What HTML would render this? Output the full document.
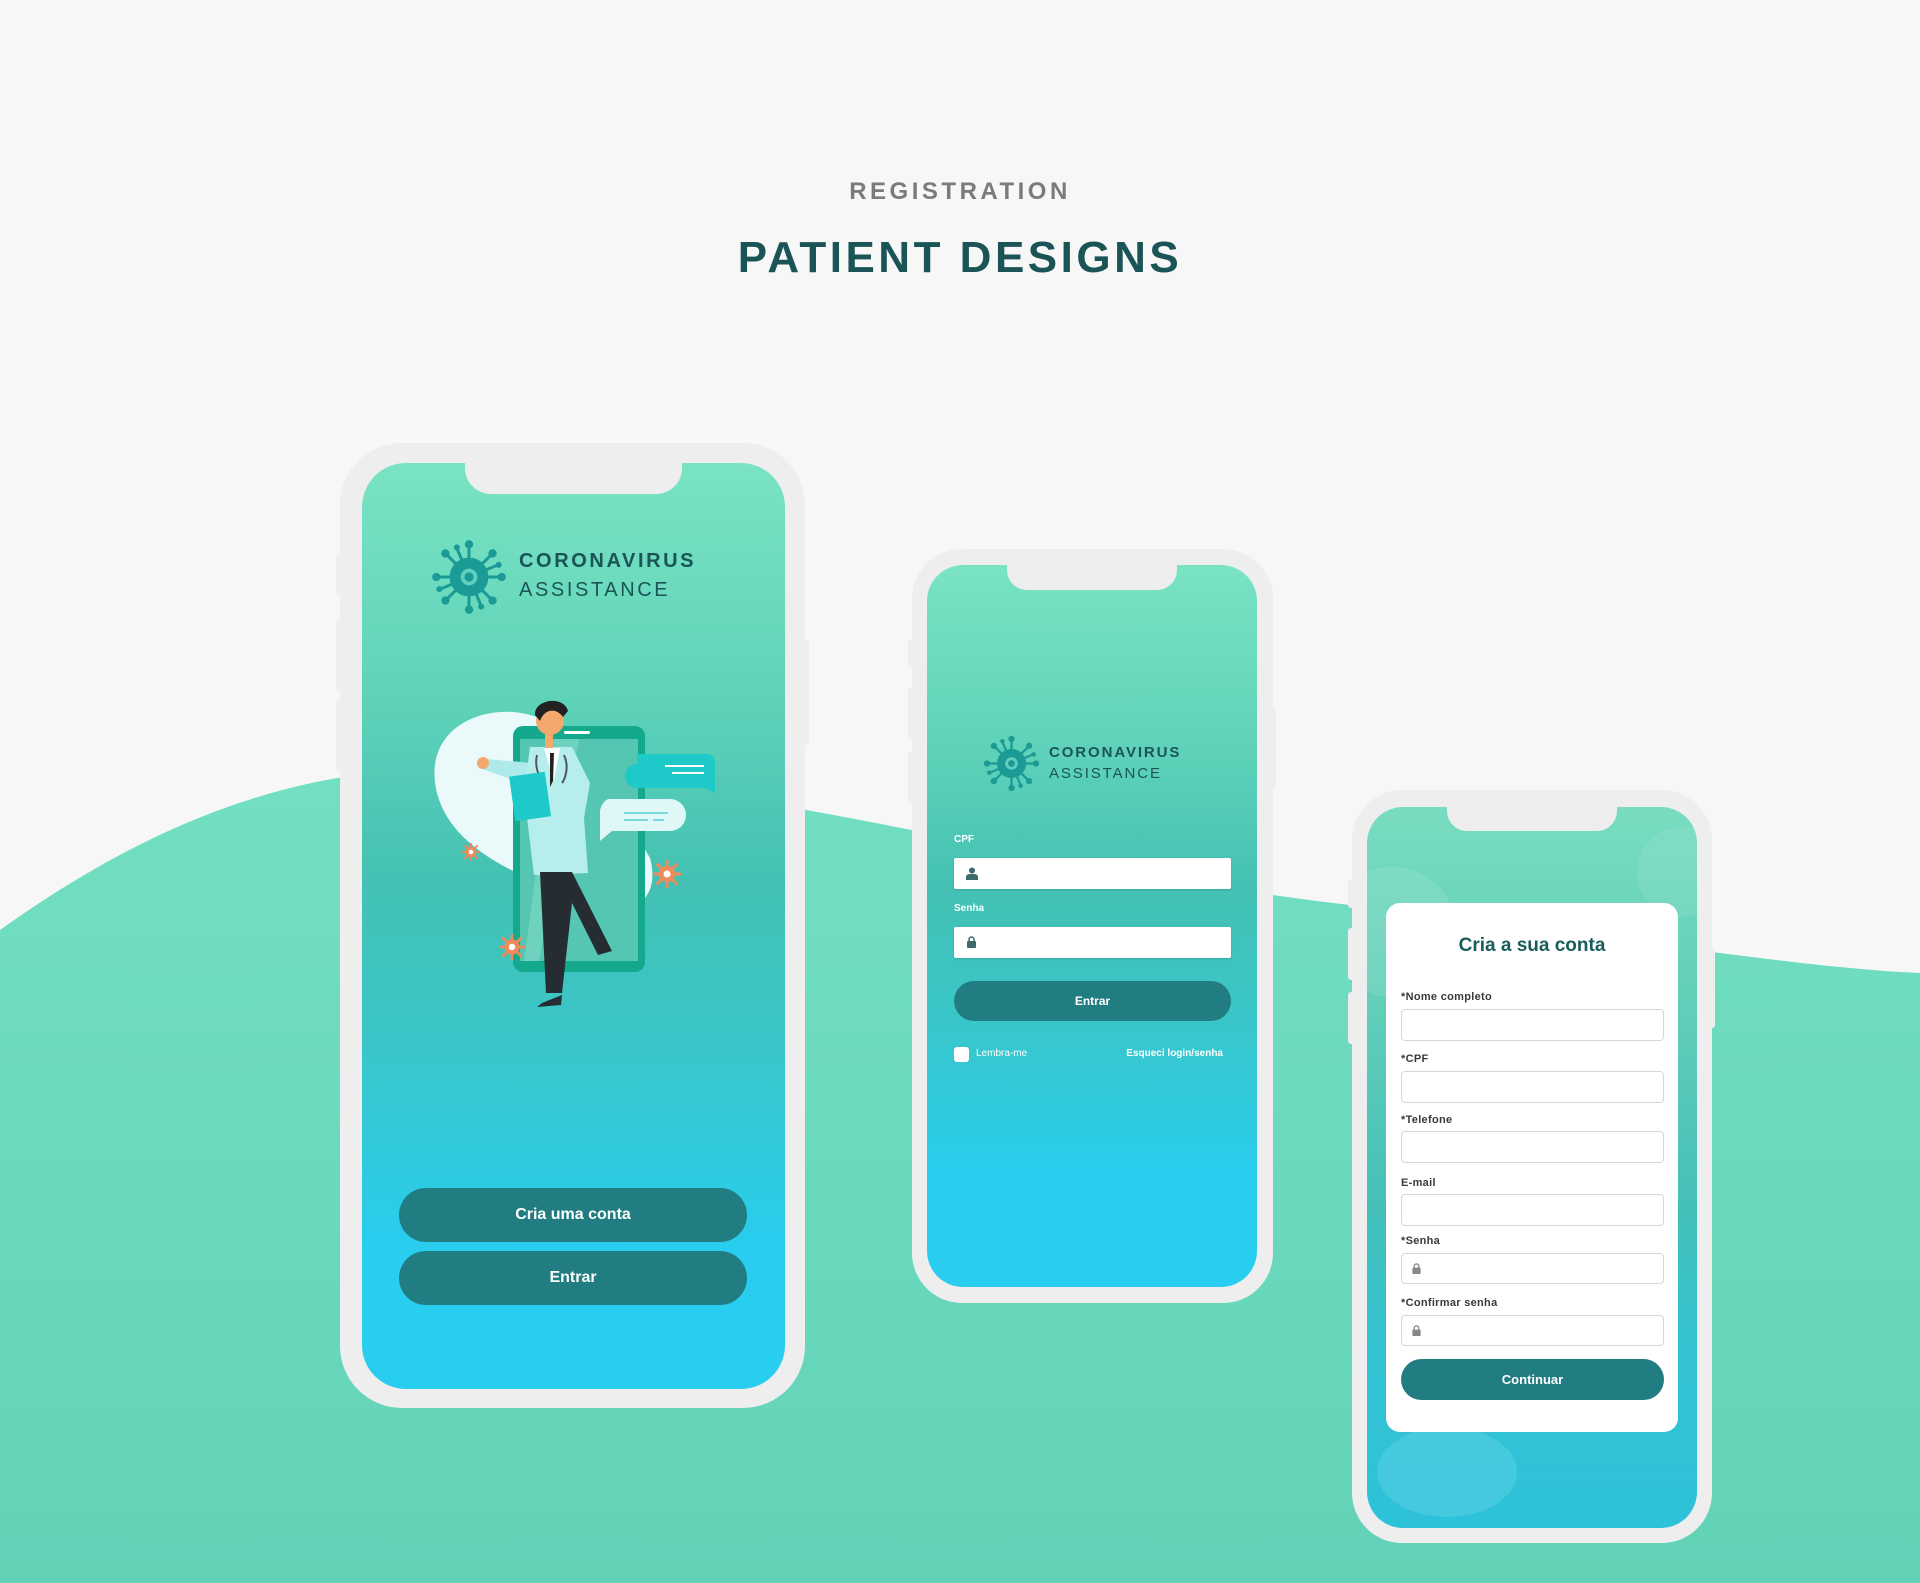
<!DOCTYPE html>
<html><head><meta charset="utf-8">
<style>
*{margin:0;padding:0;box-sizing:border-box}
body{width:1920px;height:1583px;position:relative;overflow:hidden;background:#f7f7f7;font-family:"Liberation Sans",sans-serif}
.abs{position:absolute}
.frame{position:absolute;background:#eeeeee;border-radius:62px}
.screen{position:absolute;overflow:hidden;background:linear-gradient(180deg,#7ae3c3 0%,#5fd3b9 25%,#44c1b3 45%,#38c7cc 65%,#28cdef 85%,#28cdef 100%)}
.notch{position:absolute;background:#eeeeee;border-radius:0 0 26px 26px}
.btn{position:absolute;background:#217d82;color:#fff;font-weight:bold;text-align:center;border-radius:30px}
.lbl{position:absolute;font-size:11px;font-weight:bold;color:#3a3a3a;letter-spacing:.3px}
.inp{position:absolute;background:#fff;border:1.5px solid #d6d6d6;border-radius:4px}
</style></head><body>
<svg width="0" height="0" style="position:absolute">
<defs>
<g id="virus">
<g fill="#1b9a96" stroke="#1b9a96">
<g stroke-width="4">
<line x1="50" y1="50" x2="50" y2="8"/><line x1="50" y1="50" x2="50" y2="92"/>
<line x1="50" y1="50" x2="8" y2="50"/><line x1="50" y1="50" x2="92" y2="50"/>
<line x1="50" y1="50" x2="20" y2="20"/><line x1="50" y1="50" x2="80" y2="80"/>
<line x1="50" y1="50" x2="80" y2="20"/><line x1="50" y1="50" x2="20" y2="80"/>
<line x1="50" y1="50" x2="34" y2="12"/><line x1="50" y1="50" x2="66" y2="88"/>
<line x1="50" y1="50" x2="88" y2="34"/><line x1="50" y1="50" x2="12" y2="66"/>
</g>
<circle cx="50" cy="7" r="5"/><circle cx="50" cy="93" r="5"/><circle cx="7" cy="50" r="5"/><circle cx="93" cy="50" r="5"/>
<circle cx="19" cy="19" r="5"/><circle cx="81" cy="81" r="5"/><circle cx="81" cy="19" r="5"/><circle cx="19" cy="81" r="5"/>
<circle cx="34" cy="11" r="3.5"/><circle cx="66" cy="89" r="3.5"/><circle cx="89" cy="34" r="3.5"/><circle cx="11" cy="66" r="3.5"/>
<circle cx="50" cy="50" r="25"/>
</g>
<circle cx="50" cy="50" r="11" fill="#5fcfbf"/>
<circle cx="50" cy="50" r="6" fill="#1b9a96"/>
</g>
<g id="ovir">
<g stroke="#ef8a5a" stroke-width="2.5"><line x1="12" y1="0" x2="12" y2="24"/><line x1="0" y1="12" x2="24" y2="12"/><line x1="3" y1="3" x2="21" y2="21"/><line x1="21" y1="3" x2="3" y2="21"/></g>
<circle cx="12" cy="12" r="7" fill="#ef8a5a"/><circle cx="12" cy="12" r="3" fill="#fff"/>
</g>
</defs>
</svg>

<!-- wave -->
<svg class="abs" style="left:0;top:0" width="1920" height="1583">
<defs><linearGradient id="wg" x1="0" y1="0" x2="0" y2="1"><stop offset="0" stop-color="#73dfc2"/><stop offset="1" stop-color="#62d2b7"/></linearGradient></defs>
<path d="M0,930 C140,830 260,785 380,772 C650,750 1000,865 1350,905 C1600,935 1800,968 1920,973 L1920,1583 L0,1583 Z" fill="url(#wg)"/>
</svg>

<div class="abs" style="left:0;width:1920px;top:178px;text-align:center;font-size:24px;font-weight:bold;color:#7b7b7b;letter-spacing:3.5px">REGISTRATION</div>
<div class="abs" style="left:0;width:1920px;top:233px;text-align:center;font-size:44px;font-weight:bold;color:#1b5457;letter-spacing:3.5px">PATIENT DESIGNS</div>

<!-- PHONE 1 -->
<div class="frame" style="left:336px;top:555px;width:8px;height:40px;border-radius:3px"></div>
<div class="frame" style="left:336px;top:620px;width:8px;height:70px;border-radius:3px"></div>
<div class="frame" style="left:336px;top:700px;width:8px;height:70px;border-radius:3px"></div>
<div class="frame" style="left:800px;top:640px;width:9px;height:105px;border-radius:3px"></div>
<div class="frame" style="left:340px;top:443px;width:465px;height:965px"></div>
<div class="screen" style="left:362px;top:463px;width:423px;height:926px;border-radius:44px">
 <div class="notch" style="left:103px;top:0;width:217px;height:31px"></div>
 <svg class="abs" style="left:69px;top:76px" width="76" height="76" viewBox="0 0 100 100"><use href="#virus"/></svg>
 <div class="abs" style="left:157px;top:87px;font-size:20px;font-weight:bold;color:#1b5457;letter-spacing:2.6px">CORONAVIRUS</div>
 <div class="abs" style="left:157px;top:116px;font-size:20px;color:#1b5457;letter-spacing:2.6px">ASSISTANCE</div>
 <!-- illustration -->
 <svg class="abs" style="left:0;top:0" width="423" height="600">
  <path d="M120,252 C165,240 205,262 230,300 L288,395 C300,440 265,455 235,440 C170,420 90,390 75,330 C65,290 85,262 120,252 Z" fill="#eafafa"/>
  <rect x="151" y="263" width="132" height="246" rx="10" fill="#14a98c"/>
  <rect x="158" y="276" width="118" height="222" fill="#54c6b1"/>
  <path d="M192,276 L217,276 L177,498 L162,498 Z" fill="#6fd2be"/>
  <rect x="202" y="268" width="26" height="3" rx="1.5" fill="#fff"/>
  <path d="M275,291 h70 a8,8 0 0 1 8,8 v31 l-10,-5 h-68 a12,12 0 0 1 0,-24 z" fill="#1dc9c9"/>
  <line x1="303" y1="303" x2="342" y2="303" stroke="#fff" stroke-width="2"/><line x1="310" y1="310" x2="342" y2="310" stroke="#fff" stroke-width="2"/>
  <path d="M246,336 h62 a16,16 0 0 1 0,32 h-58 l-12,10 v-26 a16,16 0 0 1 8,-16 z" fill="#dff7f7"/>
  <line x1="262" y1="350" x2="306" y2="350" stroke="#7ad9d9" stroke-width="2"/><line x1="262" y1="357" x2="286" y2="357" stroke="#7ad9d9" stroke-width="2"/><line x1="291" y1="357" x2="302" y2="357" stroke="#7ad9d9" stroke-width="2"/>
  <!-- person -->
  <path d="M170,300 L124,296 L120,306 L166,322 Z" fill="#aeeaea"/>
  <circle cx="121" cy="300" r="6" fill="#f3a86c"/>
  <path d="M168,284 L210,284 L228,320 L222,355 L226,410 L172,412 L162,330 Z" fill="#b6eeee"/>
  <path d="M182,285 L198,285 L192,318 Z" fill="#fff"/>
  <path d="M188,290 L192,290 L191,318 L188,324 Z" fill="#222"/>
  <path d="M175,292 C172,305 178,315 180,316 M202,292 C208,305 202,318 200,320" stroke="#555" stroke-width="2" fill="none"/>
  <rect x="150" y="311" width="36" height="45" fill="#1dc9c9" transform="rotate(-8 168 333)"/>
  <path d="M178,409 L210,409 L250,488 L236,492 L210,440 L200,530 L184,530 Z" fill="#252d33"/>
  <path d="M180,540 L200,532 L199,542 L175,544 Z" fill="#252d33"/>
  <circle cx="188" cy="258" r="14" fill="#f3a86c"/>
  <path d="M173,252 C172,236 202,232 206,248 L201,254 C194,244 182,246 178,258 Z" fill="#222"/>
  <rect x="183" y="271" width="8" height="14" fill="#f3a86c"/>
 </svg>
 <svg class="abs" style="left:100px;top:380px" width="18" height="18" viewBox="0 0 24 24"><use href="#ovir"/></svg>
 <svg class="abs" style="left:291px;top:397px" width="28" height="28" viewBox="0 0 24 24"><use href="#ovir"/></svg>
 <svg class="abs" style="left:137px;top:471px" width="26" height="26" viewBox="0 0 24 24"><use href="#ovir"/></svg>
 <div class="btn" style="left:37px;top:725px;width:348px;height:54px;line-height:54px;font-size:16px">Cria uma conta</div>
 <div class="btn" style="left:37px;top:788px;width:348px;height:54px;line-height:54px;font-size:16px">Entrar</div>
</div>

<!-- PHONE 2 -->
<div class="frame" style="left:908px;top:640px;width:8px;height:28px;border-radius:3px"></div>
<div class="frame" style="left:908px;top:688px;width:8px;height:52px;border-radius:3px"></div>
<div class="frame" style="left:908px;top:752px;width:8px;height:52px;border-radius:3px"></div>
<div class="frame" style="left:1268px;top:708px;width:8px;height:80px;border-radius:3px"></div>
<div class="frame" style="left:912px;top:549px;width:361px;height:754px;border-radius:50px"></div>
<div class="screen" style="left:927px;top:565px;width:330px;height:722px;border-radius:36px">
 <div class="notch" style="left:80px;top:0;width:170px;height:25px;border-radius:0 0 20px 20px"></div>
 <svg class="abs" style="left:56px;top:170px" width="57" height="57" viewBox="0 0 100 100"><use href="#virus"/></svg>
 <div class="abs" style="left:122px;top:179px;font-size:15px;font-weight:bold;color:#1b5457;letter-spacing:1.9px">CORONAVIRUS</div>
 <div class="abs" style="left:122px;top:200px;font-size:15px;color:#1b5457;letter-spacing:1.9px">ASSISTANCE</div>
 <div class="abs" style="left:27px;top:269px;font-size:10px;font-weight:bold;color:#fff">CPF</div>
 <div class="abs" style="left:27px;top:293px;width:277px;height:31px;background:#fff;border-radius:2px;box-shadow:0 1px 2px rgba(0,0,0,.15)">
  <svg class="abs" style="left:12px;top:9px" width="12" height="13" viewBox="0 0 12 13"><circle cx="6" cy="3.5" r="3" fill="#3f6a6b"/><path d="M0,13 V10 Q0,7 4,7 H8 Q12,7 12,10 V13 Z" fill="#3f6a6b"/></svg>
 </div>
 <div class="abs" style="left:27px;top:338px;font-size:10px;font-weight:bold;color:#fff">Senha</div>
 <div class="abs" style="left:27px;top:362px;width:277px;height:31px;background:#fff;border-radius:2px;box-shadow:0 1px 2px rgba(0,0,0,.15)">
  <svg class="abs" style="left:13px;top:9px" width="9" height="12" viewBox="0 0 9 12"><path d="M2,5 V3.5 a2.5,2.5 0 0 1 5,0 V5" stroke="#3f6a6b" stroke-width="1.5" fill="none"/><rect x="0" y="5" width="9" height="7" rx="1" fill="#3f6a6b"/></svg>
 </div>
 <div class="btn" style="left:27px;top:416px;width:277px;height:40px;line-height:40px;font-size:12px">Entrar</div>
 <div class="abs" style="left:27px;top:482px;width:15px;height:15px;background:#fff;border-radius:3px"></div>
 <div class="abs" style="left:49px;top:483px;font-size:10px;color:#fff">Lembra-me</div>
 <div class="abs" style="right:34px;top:483px;font-size:10px;color:#fff;font-weight:bold">Esqueci login/senha</div>
</div>

<!-- PHONE 3 -->
<div class="frame" style="left:1348px;top:880px;width:8px;height:28px;border-radius:3px"></div>
<div class="frame" style="left:1348px;top:928px;width:8px;height:52px;border-radius:3px"></div>
<div class="frame" style="left:1348px;top:992px;width:8px;height:52px;border-radius:3px"></div>
<div class="frame" style="left:1707px;top:948px;width:8px;height:80px;border-radius:3px"></div>
<div class="frame" style="left:1352px;top:790px;width:360px;height:753px;border-radius:50px"></div>
<div class="screen" style="left:1367px;top:807px;width:330px;height:721px;border-radius:36px;background:linear-gradient(180deg,#79dcc0 0%,#5fcdb8 30%,#45c0b8 55%,#34c3d2 75%,#2dc2da 100%)">
 <div class="abs" style="left:-40px;top:60px;width:130px;height:130px;border-radius:50%;background:rgba(255,255,255,.1)"></div>
 <div class="abs" style="left:270px;top:20px;width:90px;height:90px;border-radius:50%;background:rgba(255,255,255,.08)"></div>
 <div class="abs" style="left:10px;top:620px;width:140px;height:90px;border-radius:50%;background:rgba(120,220,240,.3)"></div>
 <div class="notch" style="left:80px;top:0;width:170px;height:24px;border-radius:0 0 20px 20px"></div>
 <div class="abs" style="left:19px;top:96px;width:292px;height:529px;background:#fff;border-radius:14px">
  <div class="abs" style="left:0;width:292px;top:32px;text-align:center;font-size:19px;font-weight:bold;color:#1a5d5d">Cria a sua conta</div>
  <div class="lbl" style="left:15px;top:88px">*Nome completo</div>
  <div class="inp" style="left:15px;top:106px;width:263px;height:32px"></div>
  <div class="lbl" style="left:15px;top:150px">*CPF</div>
  <div class="inp" style="left:15px;top:168px;width:263px;height:32px"></div>
  <div class="lbl" style="left:15px;top:211px">*Telefone</div>
  <div class="inp" style="left:15px;top:228px;width:263px;height:32px"></div>
  <div class="lbl" style="left:15px;top:274px">E-mail</div>
  <div class="inp" style="left:15px;top:291px;width:263px;height:32px"></div>
  <div class="lbl" style="left:15px;top:332px">*Senha</div>
  <div class="inp" style="left:15px;top:350px;width:263px;height:31px"><svg class="abs" style="left:10px;top:9px" width="9" height="11" viewBox="0 0 9 12"><path d="M2,5 V3.5 a2.5,2.5 0 0 1 5,0 V5" stroke="#888" stroke-width="1.5" fill="none"/><rect x="0" y="5" width="9" height="7" rx="1" fill="#888"/></svg></div>
  <div class="lbl" style="left:15px;top:394px">*Confirmar senha</div>
  <div class="inp" style="left:15px;top:412px;width:263px;height:31px"><svg class="abs" style="left:10px;top:9px" width="9" height="11" viewBox="0 0 9 12"><path d="M2,5 V3.5 a2.5,2.5 0 0 1 5,0 V5" stroke="#888" stroke-width="1.5" fill="none"/><rect x="0" y="5" width="9" height="7" rx="1" fill="#888"/></svg></div>
  <div class="btn" style="left:15px;top:456px;width:263px;height:41px;line-height:41px;font-size:13px;border-radius:21px">Continuar</div>
 </div>
</div>
</body></html>
